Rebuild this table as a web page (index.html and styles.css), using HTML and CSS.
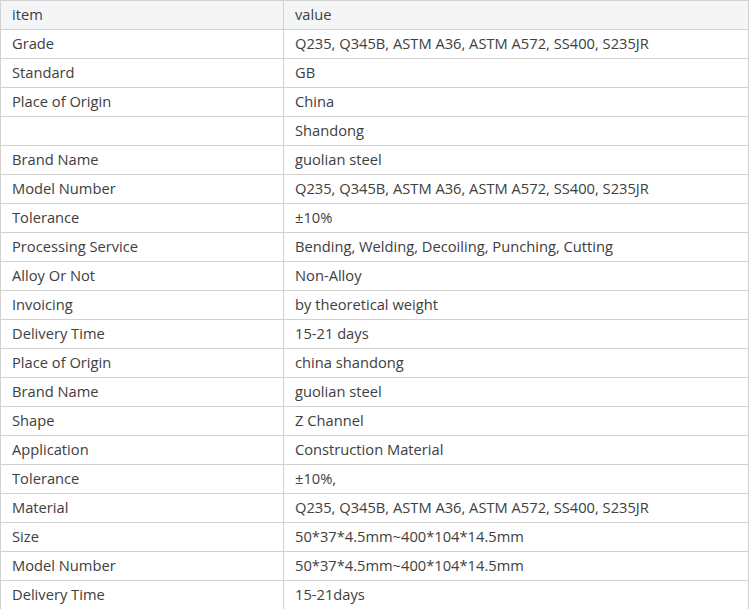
FILE: index.html
```html
<!DOCTYPE html>
<html>
<head>
<meta charset="utf-8">
<link rel="stylesheet" href="styles.css">
</head>
<body>
<table class="spec">
<thead>
<tr><th class="k">item</th><th class="v">value</th></tr>
</thead>
<tbody>
<tr><td class="k">Grade</td><td class="v">Q235, Q345B, ASTM A36, ASTM A572, SS400, S235JR</td></tr>
<tr><td class="k">Standard</td><td class="v">GB</td></tr>
<tr><td class="k">Place of Origin</td><td class="v">China</td></tr>
<tr><td class="k"></td><td class="v">Shandong</td></tr>
<tr><td class="k">Brand Name</td><td class="v">guolian steel</td></tr>
<tr><td class="k">Model Number</td><td class="v">Q235, Q345B, ASTM A36, ASTM A572, SS400, S235JR</td></tr>
<tr><td class="k">Tolerance</td><td class="v">±10%</td></tr>
<tr><td class="k">Processing Service</td><td class="v">Bending, Welding, Decoiling, Punching, Cutting</td></tr>
<tr><td class="k">Alloy Or Not</td><td class="v">Non-Alloy</td></tr>
<tr><td class="k">Invoicing</td><td class="v">by theoretical weight</td></tr>
<tr><td class="k">Delivery Time</td><td class="v">15-21 days</td></tr>
<tr><td class="k">Place of Origin</td><td class="v">china shandong</td></tr>
<tr><td class="k">Brand Name</td><td class="v">guolian steel</td></tr>
<tr><td class="k">Shape</td><td class="v">Z Channel</td></tr>
<tr><td class="k">Application</td><td class="v">Construction Material</td></tr>
<tr><td class="k">Tolerance</td><td class="v">±10%,</td></tr>
<tr><td class="k">Material</td><td class="v">Q235, Q345B, ASTM A36, ASTM A572, SS400, S235JR</td></tr>
<tr><td class="k">Size</td><td class="v">50*37*4.5mm~400*104*14.5mm</td></tr>
<tr><td class="k">Model Number</td><td class="v">50*37*4.5mm~400*104*14.5mm</td></tr>
<tr><td class="k">Delivery Time</td><td class="v">15-21days</td></tr>
</tbody>
</table>
</body>
</html>
```
FILE: styles.css
```css
html, body {
  margin: 0;
  padding: 0;
  background: #ffffff;
}
.spec {
  border-collapse: collapse;
  width: 749px;
  table-layout: fixed;
  font-family: "Open Sans", "Noto Sans", sans-serif;
  font-size: 14.7px;
  color: #404040;
}
.spec th, .spec td {
  border: 1px solid #d2d2d2;
  height: 29px;
  padding: 0 11px 2px 11px;
  text-align: left;
  font-weight: normal;
  box-sizing: border-box;
  white-space: nowrap;
}
.spec thead th {
  background: #f4f5f7;
}
.spec .k {
  width: 283px;
}
```
